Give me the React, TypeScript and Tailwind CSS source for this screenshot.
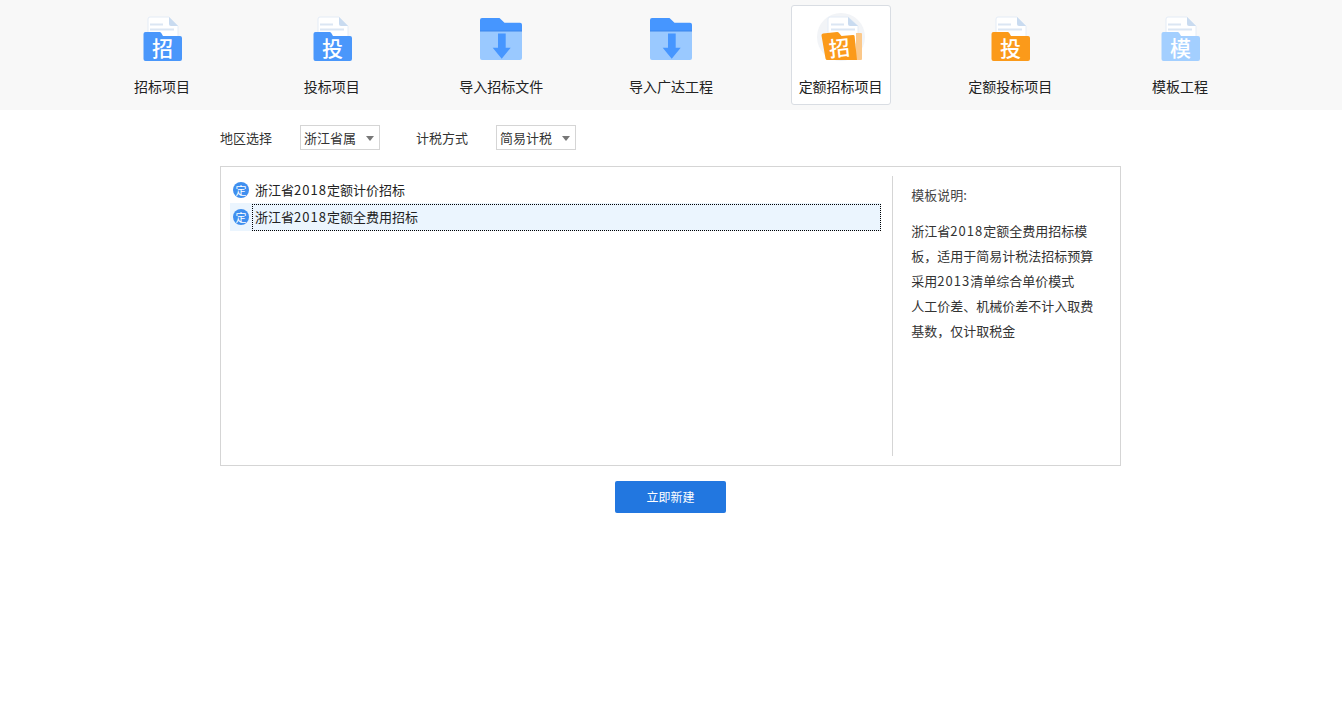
import React from "react";

const FONT = '"Noto Sans CJK SC", "Noto Sans", sans-serif';

function DocIcon({ char, color }: { char: string; color: string }) {
  return (
    <svg width="48" height="48" viewBox="0 0 48 48">
      <path d="M12 3h19l9 9v16H10V5a2 2 0 0 1 2-2z" fill="#ffffff" stroke="#e4ecf6" strokeWidth="1" />
      <path d="M31 3l9 9h-7a2 2 0 0 1-2-2z" fill="#c9dbf0" />
      <rect x="12" y="9.500" width="13" height="2" fill="#dbe6f3" />
      <rect x="12" y="14.500" width="24" height="2" fill="#dbe6f3" />
      <path d="M7.500 18h14a2 2 0 0 1 1.600.800L25 22h17a2 2 0 0 1 2 2v21a2 2 0 0 1-2 2H7.500a2 2 0 0 1-2-2V20a2 2 0 0 1 2-2z" fill={color} />
      <text x="24.500" y="42" textAnchor="middle" fontSize="21" fontWeight="500" fill="#fff" style={{ fontFamily: FONT }}>{char}</text>
    </svg>
  );
}

function ActiveIcon() {
  return (
    <svg width="48" height="48" viewBox="0 0 48 48" className="overflow-visible">
      <circle cx="24" cy="23" r="24" fill="#f2f4f7" />
      <path d="M13 3h18l10 9v18H11V5a2 2 0 0 1 2-2z" fill="#ffffff" stroke="#e4ecf6" strokeWidth="1" />
      <path d="M31 3l10 9h-8a2 2 0 0 1-2-2z" fill="#c9dbf0" />
      <rect x="14" y="9.500" width="13" height="2" fill="#dbe6f3" />
      <rect x="14" y="14.500" width="24" height="2" fill="#dbe6f3" />
      <path d="M39 19h5a1 1 0 0 1 1 1v25a1 1 0 0 1-1 1h-5z" fill="#fbc88a" />
      <path d="M6 19.500l14-1.500a2 2 0 0 1 1.800.700L24.500 22 36 21a1.500 1.500 0 0 1 1.600 1.300L40 46H10.500a2 2 0 0 1-2-1.600L4.500 21.500a1.800 1.800 0 0 1 1.500-2z" fill="#fb9a1a" />
      <text x="22.500" y="42" textAnchor="middle" fontSize="21" fontWeight="500" fill="#fff" transform="rotate(-6 22 35)" style={{ fontFamily: FONT }}>招</text>
    </svg>
  );
}

function FolderIcon() {
  return (
    <svg width="48" height="48" viewBox="0 0 48 48">
      <path d="M3 6a2 2 0 0 1 2-2h17.500l5 4.700H43a2 2 0 0 1 2 2V17H3z" fill="#4696ff" />
      <path d="M3 17h42v27a2 2 0 0 1-2 2H5a2 2 0 0 1-2-2z" fill="#9ac9ff" />
      <rect x="3" y="16.500" width="42" height="1" fill="#3d86ea" />
      <path d="M21 19.500h7.700v14.200h5L24.700 44.700 15.700 33.700H21z" fill="#4696ff" />
    </svg>
  );
}

const tabs = [
  { label: "招标项目", icon: <DocIcon char="招" color="#4a97fb" /> },
  { label: "投标项目", icon: <DocIcon char="投" color="#4a97fb" /> },
  { label: "导入招标文件", icon: <FolderIcon /> },
  { label: "导入广达工程", icon: <FolderIcon /> },
  { label: "定额招标项目", icon: <ActiveIcon />, active: true },
  { label: "定额投标项目", icon: <DocIcon char="投" color="#fb9a1a" /> },
  { label: "模板工程", icon: <DocIcon char="模" color="#a3cfff" /> },
];

function Select({ value }: { value: string }) {
  return (
    <div className="flex h-[25px] w-20 items-center justify-between border border-[#d5d5d5] bg-white pl-[3px] pr-[5px] text-[13px] text-[#333]">
      <span>{value}</span>
      <span className="mt-px h-0 w-0 border-x-4 border-t-[5px] border-x-transparent border-t-[#777]" />
    </div>
  );
}

function Badge() {
  return (
    <div className="flex h-4 w-4 items-center justify-center rounded-full bg-[#3f8fef] text-[11px] leading-none text-white">定</div>
  );
}

// digits run a little wider in the original font
function Num({ children }: { children: string }) {
  return <span className="tracking-[1px]">{children}</span>;
}

export default function App() {
  return (
    <div className="min-h-[722px] bg-white" style={{ fontFamily: FONT }}>
      {/* top tabs */}
      <div className="h-[110px] bg-[#f8f8f8] pt-[5px]">
        <div className="mx-auto flex w-[1118px] justify-between">
          {tabs.map((t) => (
            <div
              key={t.label}
              className={
                "flex h-[100px] w-[100px] flex-col items-center rounded-[3px] border pt-2 " +
                (t.active ? "border-[#d9dde3] bg-white" : "border-transparent")
              }
            >
              {t.icon}
              <div className="mt-[14px] text-sm leading-5 whitespace-nowrap text-[#222]">{t.label}</div>
            </div>
          ))}
        </div>
      </div>

      <div className="ml-[220px] w-[901px]">
        {/* filters */}
        <div className="mt-[15px] flex items-center text-[13px] text-[#333]">
          <span className="w-20">地区选择</span>
          <Select value="浙江省属" />
          <span className="ml-9 w-20">计税方式</span>
          <Select value="简易计税" />
        </div>

        {/* template list and description */}
        <div className="mt-4 flex h-[300px] border border-[#d5d5d5] py-[9px] pl-[9px]">
          <div className="w-[652px] pt-[1px] text-[13px] text-[#222]">
            <div className="flex h-[26px] items-center">
              <div className="ml-[3px] w-[19px]"><Badge /></div>
              <span className="ml-[3px]">浙江省<Num>2018</Num>定额计价招标</span>
            </div>
            <div className="flex h-[28px] items-center bg-[#ebf5fe]">
              <div className="ml-[3px] w-[19px]"><Badge /></div>
              <div className="flex h-[27px] flex-1 items-center border border-dotted border-black pl-[2px]">
                <span>浙江省<Num>2018</Num>定额全费用招标</span>
              </div>
            </div>
          </div>
          <div className="ml-[11px] w-[228px] border-l border-[#d5d5d5] pl-[18px] text-[13px] text-[#333]">
            <div className="mt-[9px] leading-5 text-[#444]">模板说明:</div>
            <div className="mt-[13px] leading-[25px]">
              <div>浙江省<Num>2018</Num>定额全费用招标模</div>
              <div>板，适用于简易计税法招标预算</div>
              <div>采用<Num>2013</Num>清单综合单价模式</div>
              <div>人工价差、机械价差不计入取费</div>
              <div>基数，仅计取税金</div>
            </div>
          </div>
        </div>

        {/* submit */}
        <div className="mt-[15px] flex justify-center">
          <button className="h-8 w-[111px] rounded-[2px] bg-[#2277e0] text-xs text-white">立即新建</button>
        </div>
      </div>
    </div>
  );
}
